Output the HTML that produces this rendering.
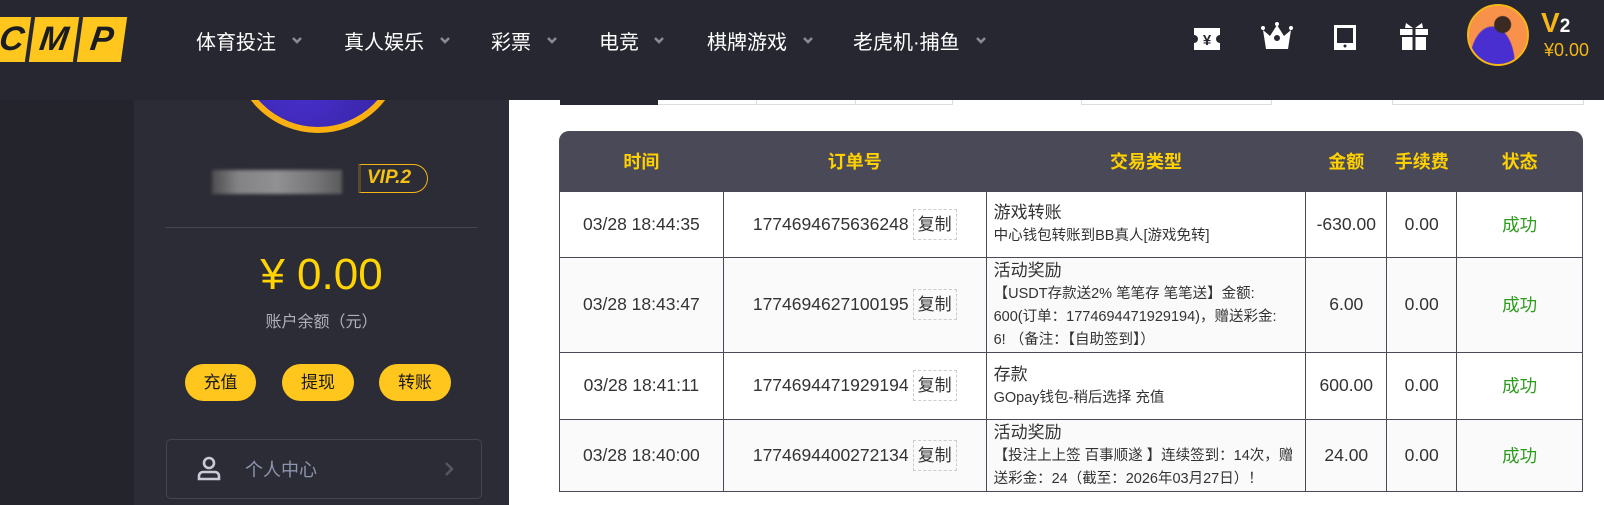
<!DOCTYPE html>
<html><head><meta charset="utf-8"><style>
*{margin:0;padding:0;box-sizing:border-box}
body{width:1604px;height:505px;overflow:hidden;background:#fff;font-family:"Liberation Sans","Noto Sans CJK SC",sans-serif;position:relative}
.abs{position:absolute}
#hdr{left:0;top:0;width:1604px;height:100px;background:#272731;z-index:5}
.nav{position:absolute;top:26px;font-size:20px;color:#fff;white-space:nowrap}
.arr{position:absolute;top:35px;width:10px;height:10px}
#left{left:0;top:100px;width:134px;height:405px;background:#24242d}
#side{left:134px;top:100px;width:375px;height:405px;background:#2c2c36}
.btn{position:absolute;top:364px;height:37px;border-radius:19px;background:#ffc61e;color:#1a1a1a;font-size:17px;text-align:center;line-height:37px}
table{position:absolute;left:559px;top:131px;width:1024px;border-collapse:collapse;font-size:17.5px;color:#333}
th{background:#4a4958;color:#ffd100;font-size:18px;height:60px;font-weight:bold}
td{border:1px solid #4a4958;text-align:center;padding:0}
tr.alt td{background:#fafafa}
td.t{text-align:left;padding:0 4px 0 7px}
td.t .a{font-size:17px;display:block;line-height:25px}
td.t .b{font-size:14.5px;display:block;line-height:23px}
.cp{display:inline-block;border:1px dashed #ccc;font-size:17px;padding:0 4px;line-height:29px;margin-left:4px}
.ok{color:#2e9a1e}
</style></head><body>
<div id="left" class="abs"></div>
<div id="side" class="abs">
</div>
<div class="abs" style="left:233px;top:-37px;width:170px;height:170px;border-radius:50%;background:radial-gradient(circle at 40% 70%,#4a2fd0,#2a1f8a);border:6px solid #fbb012;z-index:1"></div>
<div class="abs" style="left:212px;top:170px;width:130px;height:24px;background:linear-gradient(90deg,#555 0,#999 20%,#aaa 50%,#888 80%,#666);opacity:.8;filter:blur(1.5px)"></div>
<div class="abs" style="left:358px;top:164px;width:70px;height:29px;border:1.5px solid #f5b616;border-radius:0 15px 15px 0;border-left:3px solid #5a4a2a;color:#f5c116;font-style:italic;font-weight:bold;font-size:19px;line-height:26px;padding-left:6px">VIP.2</div>
<div class="abs" style="left:165px;top:227px;width:312px;height:1px;background:#45454f"></div>
<div class="abs" style="left:134px;top:250px;width:375px;text-align:center;color:#ffd400;font-size:44px;line-height:50px">¥ 0.00</div>
<div class="abs" style="left:134px;top:308px;width:375px;text-align:center;color:#b0b0b8;font-size:16px">账户余额（元）</div>
<div class="btn" style="left:185px;width:71px">充值</div>
<div class="btn" style="left:282px;width:72px">提现</div>
<div class="btn" style="left:379px;width:72px">转账</div>
<div class="abs" style="left:166px;top:439px;width:316px;height:60px;border:1px solid #45454f;border-radius:5px"></div>
<svg class="abs" style="left:196px;top:455px" width="26" height="26" viewBox="0 0 26 26" fill="none" stroke="#c8cad8" stroke-width="2.6"><circle cx="13" cy="8" r="5"/><path d="M3 24v-3a4 4 0 0 1 4-4h12a4 4 0 0 1 4 4v3z"/></svg>
<div class="abs" style="left:245px;top:456px;color:#8d96ad;font-size:18px">个人中心</div>
<svg class="abs" style="left:444px;top:461px" width="10" height="16" viewBox="0 0 10 16"><path d="M2 2l6 6-6 6" stroke="#555563" stroke-width="2.5" fill="none"/></svg>

<div id="hdr" class="abs">
 <div class="abs" style="left:0;top:17px;width:131px;height:45px;display:flex;gap:4px;overflow:hidden">
  <div style="width:38px;background:#ffc61e;transform:skewX(-8deg);color:#1b1b22;font:italic 900 34px/45px 'Liberation Sans';text-align:right;padding-right:4px;margin-left:-10px">C</div>
  <div style="width:44px;background:#ffc61e;transform:skewX(-8deg);color:#1b1b22;font:italic 900 34px/45px 'Liberation Sans';text-align:center">M</div>
  <div style="width:44px;background:#ffc61e;transform:skewX(-8deg);color:#1b1b22;font:italic 900 34px/45px 'Liberation Sans';text-align:center">P</div>
 </div>
 <div class="nav" style="left:196px">体育投注</div>
 <div class="nav" style="left:344px">真人娱乐</div>
 <div class="nav" style="left:491px">彩票</div>
 <div class="nav" style="left:599px">电竞</div>
 <div class="nav" style="left:707px">棋牌游戏</div>
 <div class="nav" style="left:853px">老虎机·捕鱼</div>
 <svg class="arr" style="left:292px" viewBox="0 0 10 10"><path d="M1 3l4 4 4-4" stroke="#8a8a96" stroke-width="2.6" fill="none"/></svg>
 <svg class="arr" style="left:440px" viewBox="0 0 10 10"><path d="M1 3l4 4 4-4" stroke="#8a8a96" stroke-width="2.6" fill="none"/></svg>
 <svg class="arr" style="left:547px" viewBox="0 0 10 10"><path d="M1 3l4 4 4-4" stroke="#8a8a96" stroke-width="2.6" fill="none"/></svg>
 <svg class="arr" style="left:654px" viewBox="0 0 10 10"><path d="M1 3l4 4 4-4" stroke="#8a8a96" stroke-width="2.6" fill="none"/></svg>
 <svg class="arr" style="left:803px" viewBox="0 0 10 10"><path d="M1 3l4 4 4-4" stroke="#8a8a96" stroke-width="2.6" fill="none"/></svg>
 <svg class="arr" style="left:976px" viewBox="0 0 10 10"><path d="M1 3l4 4 4-4" stroke="#8a8a96" stroke-width="2.6" fill="none"/></svg>
 <svg class="abs" style="left:1194px;top:28px" width="26" height="22" viewBox="0 0 26 22"><path d="M0 0h26v7a4 4 0 0 0 0 8v7H0v-7a4 4 0 0 0 0-8z" fill="#fff"/><text x="13" y="17" text-anchor="middle" font-size="15" font-weight="bold" fill="#272731" font-family="Liberation Sans">¥</text></svg>
 <svg class="abs" style="left:1261px;top:22px" width="32" height="27" viewBox="0 0 32 27"><path d="M2 8l7 6 7-11 7 11 7-6-3 19H5z" fill="#fff"/><circle cx="2" cy="6" r="2" fill="#fff"/><circle cx="30" cy="6" r="2" fill="#fff"/><circle cx="16" cy="2" r="2" fill="#fff"/><circle cx="16" cy="16" r="3" fill="#272731"/></svg>
 <svg class="abs" style="left:1334px;top:25px" width="22" height="25" viewBox="0 0 22 25"><rect x="1.5" y="1.5" width="19" height="22" fill="none" stroke="#fff" stroke-width="3"/><rect x="1" y="18" width="20" height="6" fill="#fff"/><circle cx="11" cy="21" r="1.5" fill="#272731"/></svg>
 <svg class="abs" style="left:1400px;top:22px" width="28" height="28" viewBox="0 0 28 28" fill="#fff"><path d="M6 1l7 5H5zM22 1l-7 5h8z"/><rect x="0" y="7" width="12.5" height="6"/><rect x="15.5" y="7" width="12.5" height="6"/><rect x="2" y="15" width="10.5" height="13"/><rect x="15.5" y="15" width="10.5" height="13"/></svg>
 <div class="abs" style="left:1467px;top:4px;width:62px;height:62px;border-radius:50%;border:2px solid #f5b616;background:radial-gradient(circle at 58% 32%,#3a2a22 0 8px,transparent 9px),radial-gradient(ellipse at 40% 100%,#4a2fd0 0 22px,transparent 23px),#f8914a;"></div>
 <div class="abs" style="left:1541px;top:9px;color:#f5b616;font:bold 28px/28px 'Liberation Sans'">V<span style="color:#fff;font-size:19px">2</span></div>
 <div class="abs" style="left:1544px;top:40px;color:#f5b616;font-size:18px">¥0.00</div>
</div>

<div class="abs" style="left:560px;top:100px;width:393px;height:5px;border:1px solid #ddd;border-top:none"></div>
<div class="abs" style="left:560px;top:100px;width:98px;height:5px;background:#272731"></div>
<div class="abs" style="left:756px;top:100px;width:1px;height:5px;background:#ddd"></div>
<div class="abs" style="left:855px;top:100px;width:1px;height:5px;background:#ddd"></div>
<div class="abs" style="left:1081px;top:100px;width:191px;height:5px;border:1px solid #ddd;border-top:none"></div>
<div class="abs" style="left:1392px;top:100px;width:192px;height:5px;border:1px solid #ddd;border-top:none"></div>

<div class="abs" style="left:559px;top:131px;width:1024px;height:60px;background:#4a4958;border-radius:10px 10px 0 0"></div>
<table>
<colgroup><col style="width:164px"><col style="width:263px"><col style="width:320px"><col style="width:81px"><col style="width:70px"><col style="width:126px"></colgroup>
<tr><th style="background:transparent">时间</th><th style="background:transparent">订单号</th><th style="background:transparent">交易类型</th><th style="background:transparent">金额</th><th style="background:transparent">手续费</th><th style="background:transparent">状态</th></tr>
<tr style="height:66px"><td>03/28 18:44:35</td><td>1774694675636248<span class="cp">复制</span></td><td class="t"><span class="a">游戏转账</span><span class="b">中心钱包转账到BB真人[游戏免转]</span></td><td>-630.00</td><td>0.00</td><td class="ok">成功</td></tr>
<tr class="alt" style="height:95px"><td>03/28 18:43:47</td><td>1774694627100195<span class="cp">复制</span></td><td class="t"><span class="a">活动奖励</span><span class="b">【USDT存款送2% 笔笔存 笔笔送】金额:<br>600(订单：1774694471929194)，赠送彩金:<br>6! （备注：【自助签到】）</span></td><td>6.00</td><td>0.00</td><td class="ok">成功</td></tr>
<tr style="height:67px"><td>03/28 18:41:11</td><td>1774694471929194<span class="cp">复制</span></td><td class="t"><span class="a">存款</span><span class="b">GOpay钱包-稍后选择 充值</span></td><td>600.00</td><td>0.00</td><td class="ok">成功</td></tr>
<tr class="alt" style="height:72px"><td>03/28 18:40:00</td><td>1774694400272134<span class="cp">复制</span></td><td class="t"><span class="a">活动奖励</span><span class="b">【投注上上签 百事顺遂 】连续签到：14次，赠<br>送彩金：24（截至：2026年03月27日）！</span></td><td>24.00</td><td>0.00</td><td class="ok">成功</td></tr>
</table>
</body></html>
